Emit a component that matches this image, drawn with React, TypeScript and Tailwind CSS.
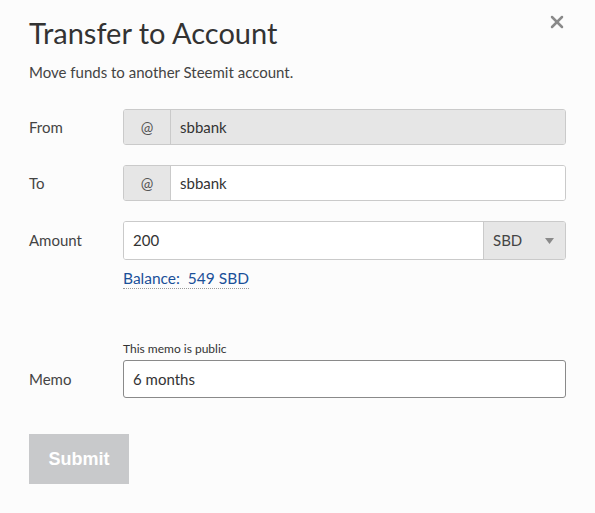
import { X } from "lucide-react";

function AtField({ value, disabled }: { value: string; disabled?: boolean }) {
  return (
    <div className="flex h-[36px] w-[443px] rounded-[3px] border border-[#cacaca] overflow-hidden">
      <span className="w-[47px] shrink-0 flex items-center justify-center bg-[#e6e6e6] border-r border-[#cacaca] text-[15px] text-[#555]">
        @
      </span>
      <span
        className={`flex-1 flex items-center pl-[9px] text-[15px] text-[#333] ${
          disabled ? "bg-[#e6e6e6]" : "bg-white"
        }`}
      >
        {value}
      </span>
    </div>
  );
}

export default function App() {
  return (
    <div
      className="w-[595px] h-[513px] bg-[#fcfcfc] relative px-[29px] pt-[14px]"
      style={{ fontFamily: "Lato, 'Liberation Sans', sans-serif" }}
    >
      <button className="absolute right-[28px] top-[12px] text-[#8a8a8a]">
        <X size={20} strokeWidth={3} />
      </button>

      <h1 className="text-[29px] leading-[38px] text-[#333] font-normal">Transfer to Account</h1>
      <p className="mt-[11px] text-[15px] leading-[18px] text-[#444]">Move funds to another Steemit account.</p>

      <div className="mt-[28px] flex flex-col">
        <div className="flex items-center h-[36px]">
          <label className="w-[94px] text-[15px] text-[#444]">From</label>
          <AtField value="sbbank" disabled />
        </div>

        <div className="flex items-center h-[36px] mt-[20px]">
          <label className="w-[94px] text-[15px] text-[#444]">To</label>
          <AtField value="sbbank" />
        </div>

        <div className="flex items-start mt-[20px]">
          <label className="w-[94px] h-[38px] flex items-center text-[15px] text-[#444]">Amount</label>
          <div className="flex flex-col">
            <div className="flex h-[39px] w-[443px] rounded-[3px] border border-[#cacaca] overflow-hidden">
              <span className="flex-1 flex items-center pl-[9px] bg-white text-[15px] text-[#333]">200</span>
              <span className="w-[82px] shrink-0 flex items-center justify-between pl-[9px] pr-[11px] bg-[#e6e6e6] border-l border-[#cacaca] text-[15px] text-[#444]">
                SBD
                <svg width="9" height="6" viewBox="0 0 9 6">
                  <path d="M0 0h9L4.5 6z" fill="#8a8a8a" />
                </svg>
              </span>
            </div>
            <span className="mt-[9px] self-start text-[15.5px] leading-[18px] text-[#1a5099] border-b border-dotted border-[#999] pb-[1px]">
              Balance:&nbsp; 549 SBD
            </span>
          </div>
        </div>

        <div className="flex items-end mt-[52px]">
          <label className="w-[94px] h-[38px] flex items-center text-[15px] text-[#444]">Memo</label>
          <div className="flex flex-col">
            <span className="text-[12px] leading-[15px] text-[#333] mb-[4px]">This memo is public</span>
            <div className="flex items-center h-[38px] w-[443px] rounded-[3px] border border-[#8a8a8a] bg-white pl-[9px] text-[15px] text-[#333]">
              6 months
            </div>
          </div>
        </div>
      </div>

      <button
        className="mt-[36px] w-[100px] h-[50px] bg-[#c8c9cb] text-white text-[18px] font-bold"
        style={{ fontFamily: "'Liberation Sans', Arial, sans-serif" }}
      >
        Submit
      </button>
    </div>
  );
}
